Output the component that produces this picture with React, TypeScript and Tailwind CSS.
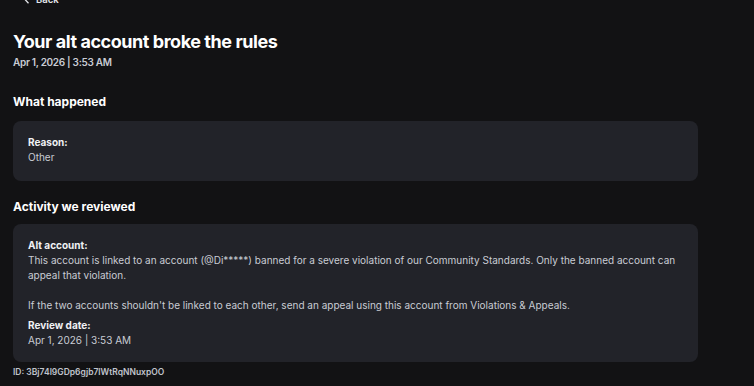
export default function App() {
  return (
    <div className="min-h-[386px] bg-[#121214] font-['Inter',sans-serif] text-[#c9ccd4] overflow-hidden">
      <div className="px-[13px] w-[711px]">
        <button className="-mt-[7px] ml-[11px] flex items-center gap-[6px] h-[14px] text-[9.5px] font-semibold text-[#e4e6eb]">
          <svg width="6" height="8" viewBox="0 0 6 8" fill="none" stroke="currentColor" strokeWidth="1.3">
            <path d="M4.5 0.8 L1.5 4 L4.5 7.2" />
          </svg>
          Back
        </button>

        <h1 className="mt-[23px] text-[18px] leading-[24px] font-bold tracking-[-0.025em] text-white">
          Your alt account broke the rules
        </h1>
        <p className="mt-[1px] text-[10px] leading-[14px] font-semibold tracking-[-0.3px] text-[#c9ccd4]">
          Apr 1, 2026 | 3:53 AM
        </p>

        <h2 className="mt-[24px] text-[12px] leading-[18px] font-bold text-white">What happened</h2>
        <div className="mt-[10px] rounded-lg bg-[#222329] px-[15px] pt-[14px] pb-[16px] text-[10px] leading-[15px]">
          <div className="font-bold text-[#f0f1f4]">Reason:</div>
          <div>Other</div>
        </div>

        <h2 className="mt-[17px] text-[12px] leading-[18px] font-bold text-white">Activity we reviewed</h2>
        <div className="mt-[8px] rounded-lg bg-[#222329] px-[15px] py-[14px] text-[10px] leading-[15px]">
          <div className="font-bold text-[#f0f1f4]">Alt account:</div>
          <div className="whitespace-pre-line">
            {"This account is linked to an account (@Di*****) banned for a severe violation of our Community Standards. Only the banned account can appeal that violation.\n\nIf the two accounts shouldn't be linked to each other, send an appeal using this account from Violations & Appeals."}
          </div>
          <div className="mt-[5px] font-bold text-[#f0f1f4]">Review date:</div>
          <div>Apr 1, 2026 | 3:53 AM</div>
        </div>

        <p className="mt-[4px] text-[8.5px] leading-[12px] font-semibold text-[#c0c4cc]">
          ID: 3Bj74l9GDp6gjb7lWtRqNNuxpOO
        </p>
      </div>
    </div>
  );
}
